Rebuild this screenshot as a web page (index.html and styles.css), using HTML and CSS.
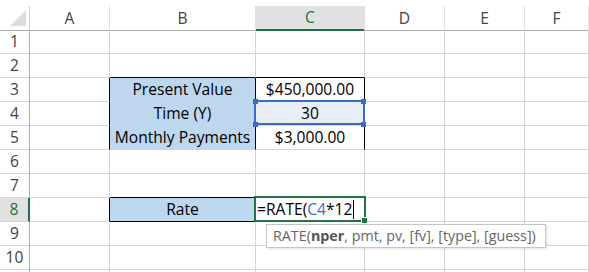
FILE: index.html
```html
<!DOCTYPE html>
<html lang="en">
<head>
    <meta charset="UTF-8">
    <title>RATE</title>
    <link rel="stylesheet" href="styles.css">
</head>
<body>
    <div class="sheet">
        <div class="row head">
            <div class="cell corner"><span class="tri"></span></div>
            <div class="cell">A</div>
            <div class="cell">B</div>
            <div class="cell active-col">C</div>
            <div class="cell">D</div>
            <div class="cell">E</div>
            <div class="cell">F</div>
        </div>
        <div class="row">
            <div class="cell rh">1</div>
            <div class="cell"></div><div class="cell"></div><div class="cell"></div>
            <div class="cell"></div><div class="cell"></div><div class="cell"></div>
        </div>
        <div class="row">
            <div class="cell rh">2</div>
            <div class="cell"></div><div class="cell bb"></div><div class="cell bb"></div>
            <div class="cell"></div><div class="cell"></div><div class="cell"></div>
        </div>
        <div class="row">
            <div class="cell rh">3</div>
            <div class="cell br"></div>
            <div class="cell label br">Present Value</div>
            <div class="cell num br">$450,000.00</div>
            <div class="cell"></div><div class="cell"></div><div class="cell"></div>
        </div>
        <div class="row">
            <div class="cell rh">4</div>
            <div class="cell br"></div>
            <div class="cell label br">Time (Y)</div>
            <div class="cell num br ref">30
                <span class="ref-box"></span>
                <span class="knob tl"></span><span class="knob tr"></span>
                <span class="knob bl"></span><span class="knob br-k"></span>
            </div>
            <div class="cell"></div><div class="cell"></div><div class="cell"></div>
        </div>
        <div class="row">
            <div class="cell rh">5</div>
            <div class="cell br"></div>
            <div class="cell label br">Monthly Payments</div>
            <div class="cell num br">$3,000.00</div>
            <div class="cell"></div><div class="cell"></div><div class="cell"></div>
        </div>
        <div class="row">
            <div class="cell rh">6</div>
            <div class="cell"></div><div class="cell"></div><div class="cell"></div>
            <div class="cell"></div><div class="cell"></div><div class="cell"></div>
        </div>
        <div class="row">
            <div class="cell rh">7</div>
            <div class="cell"></div><div class="cell bb"></div><div class="cell"></div>
            <div class="cell"></div><div class="cell"></div><div class="cell"></div>
        </div>
        <div class="row">
            <div class="cell rh active-row">8</div>
            <div class="cell br"></div>
            <div class="cell label bb">Rate</div>
            <div class="cell edit"><span>=RATE(<span class="ref-txt">C4</span>*12</span><span class="caret"></span>
                <span class="edit-box"></span>
                <span class="fill"></span>
            </div>
            <div class="cell"></div><div class="cell"></div><div class="cell"></div>
        </div>
        <div class="row">
            <div class="cell rh">9</div>
            <div class="cell"></div><div class="cell"></div><div class="cell"></div>
            <div class="cell"></div><div class="cell"></div><div class="cell"></div>
        </div>
        <div class="row">
            <div class="cell rh">10</div>
            <div class="cell"></div><div class="cell"></div><div class="cell"></div>
            <div class="cell"></div><div class="cell"></div><div class="cell"></div>
        </div>
        <div class="row">
            <div class="cell rh"></div>
            <div class="cell"></div><div class="cell"></div><div class="cell"></div>
            <div class="cell"></div><div class="cell"></div><div class="cell"></div>
        </div>

        <div class="tip">RATE(<b>nper</b>, pmt, pv, [fv], [type], [guess])</div>
    </div>
</body>
</html>
```

FILE: styles.css
```css
body {
    margin: 0;
    background: #fff;
    font-family: "Open Sans", "Liberation Sans", sans-serif;
    font-size: 15.6px;
    color: #000;
    overflow: hidden;
}

.sheet {
    position: relative;
    padding-top: 6px;
}

.row {
    display: grid;
    grid-template-columns: 30px 80px 146px 109px 80px 80px 64px;
    height: 24px;
}

.cell {
    box-sizing: border-box;
    border-right: 1px solid #d4d4d4;
    border-bottom: 1px solid #d4d4d4;
    display: flex;
    align-items: center;
    justify-content: center;
    white-space: nowrap;
    line-height: 23px;
}

/* headers */
.head .cell {
    color: #444;
    border-right-color: #e1e1e1;
    border-bottom-color: #ababab;
}

.head .corner {
    position: relative;
    border-right-color: #d4d4d4;
}

.tri {
    position: absolute;
    left: 10px;
    top: 4px;
    width: 0;
    height: 0;
    border-left: 16px solid transparent;
    border-bottom: 16px solid #dcdcdc;
}

.head .active-col {
    background: #e1e1e1;
    color: #217346;
    border-bottom: 2px solid #217346;
}

.rh {
    color: #444;
    border-right-color: #ababab;
}

.rh.active-row {
    background: #e1e1e1;
    color: #217346;
    border-right: 2px solid #217346;
}

/* black borders */
.br {
    border-right-color: #000;
}

.bb {
    border-bottom-color: #000;
}

.label {
    background: #bdd7ee;
}

/* C4 reference highlight */
.ref {
    position: relative;
    background: #e8eef8;
}

.ref-box {
    position: absolute;
    top: -2px;
    left: -2px;
    right: -1px;
    bottom: 0;
    border: 2px solid #3a6cc6;
}

.knob {
    position: absolute;
    width: 5px;
    height: 5px;
    background: #3a6cc6;
}

.knob.tl { top: -3px; left: -3px; }
.knob.tr { top: -3px; right: -2px; }
.knob.bl { bottom: -2px; left: -3px; }
.knob.br-k { bottom: -2px; right: -2px; }

/* C8 editing */
.edit {
    position: relative;
    justify-content: flex-start;
    padding-left: 1px;
}

.ref-txt {
    color: #3a6cc6;
}

.caret {
    display: inline-block;
    width: 1px;
    height: 19px;
    margin-left: 1px;
    background: #000;
}

.edit-box {
    position: absolute;
    top: -2px;
    left: -2px;
    right: -2px;
    bottom: -1px;
    border: 2px solid #217346;
}

.fill {
    position: absolute;
    right: -3px;
    bottom: -2px;
    width: 5px;
    height: 5px;
    background: #217346;
    border-left: 1px solid #fff;
    border-top: 1px solid #fff;
}

.tip {
    position: absolute;
    left: 266px;
    top: 224px;
    width: 280px;
    height: 24px;
    box-sizing: border-box;
    background: #fff;
    border: 1px solid #c6c6c6;
    box-shadow: 1px 1px 2px rgba(0, 0, 0, 0.12);
    color: #666;
    font-size: 14.3px;
    line-height: 22px;
    padding-left: 6px;
    white-space: nowrap;
}

.tip b {
    color: #555;
}
```
